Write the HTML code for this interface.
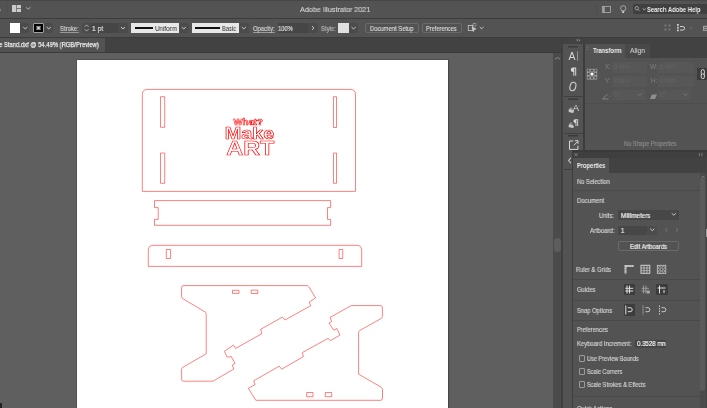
<!DOCTYPE html>
<html><head><meta charset="utf-8">
<style>
*{margin:0;padding:0;box-sizing:border-box}
html,body{width:707px;height:408px;overflow:hidden;background:#535353;font-family:"Liberation Sans",sans-serif;color:#d6d6d6}
.a{position:absolute}
.t{position:absolute;white-space:nowrap;line-height:1;transform-origin:0 0;will-change:transform}
svg{position:absolute;left:0;top:0;will-change:transform}
</style></head><body>
<!-- title bar -->
<div class="a" style="left:0;top:0;width:707px;height:1px;background:#474747"></div>
<div class="a" style="left:0;top:18px;width:707px;height:1px;background:#3c3c3c"></div>
<div class="a" style="left:0;top:37px;width:707px;height:1px;background:#3c3c3c"></div>
<!-- tab bar -->
<div class="a" style="left:0;top:38px;width:562px;height:14px;background:#424242"></div>
<div class="a" style="left:0;top:38px;width:105px;height:14px;background:#535353"></div>
<div class="a" style="left:0;top:52px;width:562px;height:1px;background:#3a3a3a"></div>
<!-- canvas -->
<div class="a" style="left:0;top:53px;width:553.2px;height:355px;background:#5f5f5f"></div>
<div class="a" style="left:77px;top:60px;width:370.5px;height:348px;background:#fff;box-shadow:0 0 0 0.6px #4a4a4a,1px 0 1px rgba(0,0,0,.25)"></div>
<div class="a" style="left:553.2px;top:53px;width:8.2px;height:355px;background:#4b4b4b"></div>
<div class="a" style="left:553.8px;top:238.4px;width:7.4px;height:13.7px;background:#5d5d5d;border-radius:3.7px"></div>
<div class="a" style="left:561.4px;top:38px;width:2px;height:370px;background:#404040"></div>
<!-- right dock -->
<div class="a" style="left:563.4px;top:38px;width:143.6px;height:6px;background:#424242"></div>
<div class="a" style="left:563.4px;top:44px;width:19.6px;height:364px;background:#535353"></div>
<div class="a" style="left:583px;top:44px;width:2px;height:106px;background:#3c3c3c"></div>
<div class="a" style="left:585px;top:44px;width:122px;height:106px;background:#535353"></div>
<div class="a" style="left:585px;top:44px;width:122px;height:14px;background:#424242"></div>
<div class="a" style="left:585px;top:44px;width:40px;height:14px;background:#535353"></div>
<div class="a" style="left:625px;top:44px;width:25px;height:14px;background:#494949"></div>
<!-- transform inputs -->
<div class="a" style="left:585px;top:103px;width:122px;height:1px;background:#4e4e4e"></div>
<div class="a" style="left:612px;top:61.5px;width:35px;height:11px;background:#575757"></div>
<div class="a" style="left:658px;top:61.5px;width:36px;height:11px;background:#575757"></div>
<div class="a" style="left:612px;top:75.5px;width:35px;height:11px;background:#575757"></div>
<div class="a" style="left:658px;top:75.5px;width:36px;height:11px;background:#575757"></div>
<div class="a" style="left:612px;top:89.5px;width:32.5px;height:10.5px;background:#575757"></div>
<div class="a" style="left:658px;top:89.5px;width:32px;height:10.5px;background:#575757"></div>
<div class="a" style="left:697px;top:67.5px;width:10px;height:12px;background:#3c3c3c"></div>
<!-- tool strip separators -->
<div class="a" style="left:564px;top:96px;width:19px;height:1px;background:#404040"></div>
<div class="a" style="left:564px;top:132.5px;width:19px;height:1px;background:#404040"></div>
<div class="a" style="left:564px;top:169px;width:8px;height:1px;background:#404040"></div>

<!-- properties panel -->
<div class="a" style="left:571.5px;top:151.5px;width:136px;height:257px;background:#535353"></div>
<div class="a" style="left:571.5px;top:151.5px;width:1px;height:257px;background:#3e3e3e"></div>
<div class="a" style="left:571.5px;top:150px;width:136px;height:1.5px;background:#3a3a3a"></div>
<div class="a" style="left:571.5px;top:151.5px;width:136px;height:6.5px;background:#3f3f3f"></div>
<div class="a" style="left:572.5px;top:158px;width:135px;height:14.5px;background:#424242"></div>
<div class="a" style="left:572.5px;top:158px;width:36.5px;height:14.5px;background:#535353"></div>
<div class="a" style="left:572.5px;top:190px;width:127px;height:1px;background:#4a4a4a"></div>
<div class="a" style="left:618px;top:210px;width:60.5px;height:9.5px;background:#474747;border-radius:1px"></div>
<div class="a" style="left:618px;top:225.5px;width:29px;height:9.5px;background:#474747"></div>
<div class="a" style="left:647px;top:225.5px;width:10px;height:9.5px;background:#4c4c4c"></div>
<div class="a" style="left:617.5px;top:240.5px;width:61.5px;height:10.5px;border:1px solid #6a6a6a;border-radius:2px"></div>
<div class="a" style="left:572.5px;top:279px;width:127px;height:1px;background:#4a4a4a"></div>
<div class="a" style="left:572.5px;top:299.5px;width:127px;height:1px;background:#4a4a4a"></div>
<div class="a" style="left:572.5px;top:320px;width:127px;height:1px;background:#4a4a4a"></div>
<div class="a" style="left:623.5px;top:283.5px;width:11.5px;height:11.5px;background:#3c3c3c;border-radius:1px"></div>
<div class="a" style="left:655.5px;top:283.5px;width:12px;height:11.5px;background:#3c3c3c;border-radius:1px"></div>
<div class="a" style="left:623.5px;top:304px;width:11.5px;height:11.5px;background:#3c3c3c;border-radius:1px"></div>
<div class="a" style="left:634.5px;top:339.5px;width:31px;height:8.5px;background:#454545"></div>
<div class="a" style="left:578.8px;top:355px;width:6.2px;height:6.8px;border:1px solid #9c9c9c;border-radius:1px"></div>
<div class="a" style="left:578.8px;top:368px;width:6.2px;height:6.8px;border:1px solid #9c9c9c;border-radius:1px"></div>
<div class="a" style="left:578.8px;top:381px;width:6.2px;height:6.8px;border:1px solid #9c9c9c;border-radius:1px"></div>
<div class="a" style="left:572.5px;top:395.5px;width:127px;height:1px;background:#4a4a4a"></div>
<div class="a" style="left:699.5px;top:172.5px;width:7.5px;height:236px;background:#4b4b4b"></div>
<div class="a" style="left:699.6px;top:178px;width:5.8px;height:213px;background:#5b5b5b;border-radius:3px"></div>
<div class="a" style="left:705.6px;top:158px;width:1.4px;height:250px;background:#444"></div>
<div class="a" style="left:706px;top:229px;width:1px;height:8px;background:#a0a0a0"></div>

<!-- control bar boxes -->
<div class="a" style="left:10px;top:23px;width:10px;height:10px;background:#fff"></div>
<div class="a" style="left:20px;top:23px;width:9px;height:10px;background:#4b4b4b"></div>
<div class="a" style="left:33px;top:23px;width:11px;height:10px;background:#000;border:1px solid #a0a0a0;border-radius:1px"></div>
<div class="a" style="left:44px;top:23px;width:9px;height:10px;background:#4b4b4b"></div>
<div class="a" style="left:82px;top:23px;width:9px;height:10.3px;background:#4b4b4b"></div>
<div class="a" style="left:91px;top:23px;width:27px;height:10.3px;background:#464646"></div>
<div class="a" style="left:118px;top:23px;width:10px;height:10.3px;background:#4b4b4b"></div>
<div class="a" style="left:131.4px;top:22.8px;width:47.5px;height:10.2px;background:#e8e8e8"></div>
<div class="a" style="left:134.6px;top:27.4px;width:18.4px;height:1.4px;background:#111"></div>
<div class="a" style="left:179px;top:23px;width:9.5px;height:10px;background:#4b4b4b"></div>
<div class="a" style="left:192.1px;top:22.8px;width:46.8px;height:10.2px;background:#e8e8e8"></div>
<div class="a" style="left:194.9px;top:27.4px;width:25.3px;height:1.4px;background:#111"></div>
<div class="a" style="left:239px;top:23px;width:9.5px;height:10px;background:#4b4b4b"></div>
<div class="a" style="left:277.8px;top:23px;width:30px;height:10px;background:#464646"></div>
<div class="a" style="left:308px;top:23px;width:10px;height:10px;background:#4b4b4b"></div>
<div class="a" style="left:338px;top:23px;width:11px;height:10px;background:#e0e0e0"></div>
<div class="a" style="left:349px;top:23px;width:9px;height:10px;background:#4b4b4b"></div>
<div class="a" style="left:365px;top:23.3px;width:54px;height:9.5px;border:1px solid #696969;border-radius:2px"></div>
<div class="a" style="left:421.8px;top:23.3px;width:40.2px;height:9.5px;border:1px solid #696969;border-radius:2px"></div>
<div class="a" style="left:632.7px;top:4.4px;width:74.3px;height:9.4px;background:#404040;border-radius:2px 0 0 2px"></div>

<svg width="707" height="408" viewBox="0 0 707 408">
<g fill="none" stroke="#c9c9c9" stroke-width="1" stroke-linecap="round">
<!-- chevrons -->
<path d="M23.5 27.3 l1.8 1.6 l1.8 -1.6"/>
<path d="M47 27.3 l1.8 1.6 l1.8 -1.6"/>
<path d="M121.2 27.3 l1.8 1.6 l1.8 -1.6"/>
<path d="M182 27.3 l1.8 1.6 l1.8 -1.6"/>
<path d="M242 27.3 l1.8 1.6 l1.8 -1.6"/>
<path d="M351.8 27.3 l1.8 1.6 l1.8 -1.6"/>
<path d="M480 27.3 l1.6 1.4 l1.6 -1.4"/>
<path d="M26.3 7.6 l1.9 1.5 l1.9 -1.5" stroke="#b8b8b8" stroke-width="0.9"/>
<path d="M312.4 26.4 l1.4 1.6 l-1.4 1.6"/>
<path d="M85 26.5 l1.6 -1.6 l1.6 1.6 M85 29.5 l1.6 1.6 l1.6 -1.6" stroke-width="0.8"/>
<path d="M555.3 59 l2.2 -1.6 l2.2 1.6" stroke="#9a9a9a" stroke-width="0.8"/>
<path d="M672 213.6 l1.8 1.6 l1.8 -1.6"/>
<path d="M650.5 229 l1.8 1.6 l1.8 -1.6"/>
<path d="M666.8 228.5 l-1.3 1.5 l1.3 1.5" stroke="#777"/>
<path d="M676.5 228.5 l1.3 1.5 l-1.3 1.5" stroke="#777"/>
<path d="M638 94 l1.6 1.4 l1.6 -1.4" stroke="#777"/>
<path d="M684 94 l1.6 1.4 l1.6 -1.4" stroke="#777"/>
<path d="M570.6 158.2 l-2 2.3 l2 2.3" stroke="#c4c4c4" stroke-width="1.1"/>
<path d="M643 8.8 l1.2 1 l1.2 -1" stroke-width="0.8"/>
</g>
<!-- title bar icons -->
<rect x="7" y="4" width="1" height="10" fill="#4e4e4e"/>
<rect x="0" y="9.3" width="1" height="1.6" fill="#8a8a8a"/>
<rect x="12" y="5" width="4.2" height="7" fill="#cacaca"/>
<rect x="16.8" y="5" width="4.2" height="3.1" fill="#cacaca"/>
<rect x="16.8" y="8.8" width="4.2" height="3.2" fill="#cacaca"/>
<rect x="596.3" y="4.5" width="0.8" height="9.5" fill="#4c4c4c"/>
<rect x="602.3" y="6.3" width="8.3" height="6.3" fill="none" stroke="#bdbdbd" stroke-width="0.7"/>
<rect x="602.6" y="6.6" width="2.2" height="5.7" fill="#a0a0a0"/>
<circle cx="623.2" cy="8.3" r="2.6" fill="none" stroke="#c4c4c4" stroke-width="0.7"/>
<path d="M622 10.5 l0.5 1.2 h1.4 l0.5 -1.2" fill="none" stroke="#c4c4c4" stroke-width="0.6"/>
<rect x="622.3" y="11.4" width="1.8" height="1.6" fill="#d8d8d8"/>
<circle cx="636.8" cy="8.2" r="1.7" fill="none" stroke="#c0c0c0" stroke-width="0.7"/>
<path d="M638 9.4 l1.5 1.5" stroke="#c0c0c0" stroke-width="0.7"/>
<!-- stroke swatch inner -->
<rect x="36.4" y="25.9" width="4.2" height="4.2" fill="#7a7a7a"/>
<path d="M37.1 26.6 l2.8 2.8 M39.9 26.6 l-2.8 2.8" stroke="#ffffff" stroke-width="0.9"/>
<!-- misc control bar icons -->
<g fill="none" stroke="#c8c8c8" stroke-width="0.8">
<rect x="468.3" y="25.5" width="4.5" height="5"/>
<path d="M472 27 l4 2 l-2 0.6 l-0.6 2 z" fill="#c8c8c8"/>
<rect x="473" y="23.5" width="3" height="2.5" stroke-dasharray="0.8 0.6"/>
</g>
<g fill="#7a7a7a">
<rect x="664.5" y="24.5" width="2" height="2"/><rect x="668.5" y="24.5" width="2" height="2"/>
<rect x="664.5" y="28.5" width="2" height="2"/><rect x="668.5" y="28.5" width="2" height="2"/>
</g>
<path d="M677.9 24 v8" stroke="#d0d0d0" stroke-width="1.8" stroke-dasharray="1.8 0.9"/>
<path d="M680 26.5 h2.8 a1.8 1.8 0 0 1 0 3.6 h-2.8" fill="none" stroke="#d0d0d0" stroke-width="1"/>
<path d="M689.5 27.3 l1.5 1.4 l1.5 -1.4" fill="none" stroke="#7a7a7a" stroke-width="0.8"/>
<path d="M703.5 26.3 h3.5 M703.5 28.3 h3.5 M703.5 30.3 h3.5" stroke="#b0b0b0" stroke-width="1"/><path d="M703.5 26 v4.8" stroke="#b0b0b0" stroke-width="0.8"/>
<!-- dock top chevrons -->
<path d="M576.6 39.4 l1.3 0.8 l-1.3 0.8 M578.8 39.4 l1.3 0.8 l-1.3 0.8" fill="none" stroke="#a8a8a8" stroke-width="0.7"/>
<!-- tool strip icons -->
<text x="568.6" y="59.7" font-family="Liberation Sans" font-size="10.4" fill="#d8d8d8">A</text>
<rect x="577" y="51.4" width="0.8" height="9.3" fill="#a8a8a8"/>
<path d="M573.3 67.6 h2.9 v8.1 h-1 v-7.2 h-0.9 v7.2 h-1 v-3.8 h-0.3 a2.2 2.2 0 0 1 0 -4.4 z" fill="#d8d8d8"/>
<ellipse cx="572.9" cy="86.5" rx="2.9" ry="4.3" transform="rotate(14 572.9 86.5)" fill="none" stroke="#cfcfcf" stroke-width="1.1"/>
<text x="572.8" y="110.5" font-family="Liberation Sans" font-size="9.4" fill="#d8d8d8">A</text>
<circle cx="570.2" cy="110.8" r="1.7" fill="#c8c8c8"/><circle cx="572.3" cy="111.5" r="1.5" fill="#c8c8c8"/><circle cx="571" cy="109" r="1.2" fill="none" stroke="#c8c8c8" stroke-width="0.6"/>
<path d="M575.2 119.3 h2.9 v6.6 h-0.9 v-5.8 h-0.8 v5.8 h-0.9 v-2.8 a1.9 1.9 0 0 1 -0.3 -3.8 z" fill="#d8d8d8"/>
<circle cx="570.2" cy="125.9" r="1.7" fill="#c8c8c8"/><circle cx="572.3" cy="126.6" r="1.5" fill="#c8c8c8"/><circle cx="571" cy="124.1" r="1.2" fill="none" stroke="#c8c8c8" stroke-width="0.6"/>
<path d="M573.2 141 h-3.7 v8.4 h8.4 v-3.7 M573.8 145.4 l4 -4 M574.9 140.7 h3.1 v3.1" fill="none" stroke="#d8d8d8" stroke-width="1"/>
<path d="M568 46.8 h10 M568 99.3 h10 M568 135.8 h10" stroke="#3a3a3a" stroke-width="1.4"/>
<!-- properties panel header -->
<path d="M574.5 153.2 l3 3 M577.5 153.2 l-3 3" stroke="#9a9a9a" stroke-width="0.7"/>
<path d="M700.2 153.3 l-1.4 1.3 l1.4 1.3 M702.6 153.3 l-1.4 1.3 l1.4 1.3" fill="none" stroke="#a8a8a8" stroke-width="0.7"/>
<path d="M701.3 177.8 l1.7 -1.5 l1.7 1.5" fill="none" stroke="#9a9a9a" stroke-width="0.7"/>
<!-- transform panel icons -->
<path d="M587.4 46.5 v1 M587.4 49 v1" stroke="#8a8a8a" stroke-width="0.8"/>
<rect x="586.8" y="68.8" width="10.4" height="10.8" fill="#9a9a9a"/>
<g fill="#4a4a4a">
<rect x="587.6" y="69.5" width="1.9" height="1.9"/><rect x="591" y="69.5" width="1.9" height="1.9"/><rect x="594.5" y="69.5" width="1.9" height="1.9"/>
<rect x="587.6" y="73.1" width="1.9" height="1.9"/><rect x="594.5" y="73.1" width="1.9" height="1.9"/>
<rect x="587.6" y="76.7" width="1.9" height="1.9"/><rect x="591" y="76.7" width="1.9" height="1.9"/><rect x="594.5" y="76.7" width="1.9" height="1.9"/>
</g>
<g fill="#707070">
<rect x="589.6" y="71.4" width="1.4" height="1.6"/><rect x="593" y="71.4" width="1.4" height="1.6"/>
<rect x="589.6" y="75.1" width="1.4" height="1.6"/><rect x="593" y="75.1" width="1.4" height="1.6"/>
</g>
<rect x="590.9" y="73" width="2.2" height="2.2" fill="#ffffff"/>
<rect x="701.2" y="69.6" width="3.2" height="5.2" rx="1.6" fill="none" stroke="#e0e0e0" stroke-width="0.9"/>
<rect x="701.2" y="73.4" width="3.2" height="5.2" rx="1.6" fill="none" stroke="#e0e0e0" stroke-width="0.9"/>
<path d="M702.8 72.5 v3.2" stroke="#3c3c3c" stroke-width="0.8"/>
<path d="M602.5 99 l5 -5 M602.5 99 h6" fill="none" stroke="#909090" stroke-width="0.8"/>
<path d="M650 99 l2 -4.5 h5 l-2 4.5 z" fill="#909090"/>
<!-- properties icons -->
<g fill="none" stroke="#d0d0d0" stroke-width="1">
<path d="M625.5 273.5 v-7.5 h8.2" stroke-width="2" stroke="#c8c8c8"/>
<path d="M627 266 h6.5 M625.5 267.5 v6" stroke-width="0.6" stroke="#6a6a6a" stroke-dasharray="0.6 0.9"/>
<rect x="641" y="265.3" width="8.8" height="8"/>
<path d="M644 265.3 v8 M647 265.3 v8 M641 268 h8.8 M641 270.7 h8.8" stroke-width="0.7"/>
<rect x="657.3" y="265.3" width="8.5" height="8" stroke-width="0.8"/>
<circle cx="659.8" cy="267.7" r="1.3" stroke-width="0.6"/><circle cx="663.3" cy="267.7" r="1.3" stroke-width="0.6"/>
<circle cx="659.8" cy="271" r="1.3" stroke-width="0.6"/><circle cx="663.3" cy="271" r="1.3" stroke-width="0.6"/>
<!-- guides -->
<path d="M627 285.5 v8 M629.5 285.5 v8 M625.3 288.3 h8 M625.3 291 h8" stroke="#e0e0e0"/>
<path d="M643.5 285.5 v8 M646 285.5 v8 M641.5 288.3 h7.5 M641.5 291 h5" stroke="#a8a8a8" stroke-width="0.8"/>
<rect x="646.8" y="290.5" width="3" height="3" fill="#a8a8a8" stroke="none"/>
<path d="M659.5 285.5 v8 M657.5 288 h8" stroke="#e0e0e0"/>
<path d="M664 290 v3" stroke="#e0e0e0"/>
<!-- snap -->
<path d="M625.8 305.5 v9" stroke="#e0e0e0"/>
<path d="M627.8 307.7 h2.4 a2 2 0 0 1 0 4 h-2.4" stroke="#e0e0e0"/>
<path d="M643 305.5 v9" stroke="#b8b8b8" stroke-dasharray="1 0.7"/>
<path d="M645.5 307.7 h2.4 a2 2 0 0 1 0 4 h-2.4" stroke="#c8c8c8"/>
<path d="M659.5 305.5 v9" stroke="#c8c8c8" stroke-dasharray="1.5 1"/>
<path d="M661.5 307.7 h2.4 a2 2 0 0 1 0 4 h-2.4" stroke="#c8c8c8"/>
</g>
<!-- artwork -->
<g fill="none" stroke="#ff0000" stroke-width="0.5" stroke-linejoin="round">
<path d="M142.3 191.4 V94.6 Q142.3 89.4 147.5 89.4 H350.3 Q355.5 89.4 355.5 94.6 V191.4 Z"/>
<rect x="160.5" y="96.7" width="4.2" height="30.6"/>
<rect x="333.5" y="96.7" width="3" height="30.8"/>
<rect x="160.5" y="153" width="4.2" height="30.3"/>
<rect x="333.5" y="153" width="3" height="30.3"/>
<path d="M154.5 200.6 H330.6 V207.6 H327.5 V219.4 H330.6 V225.3 H154.5 V219.4 H158.2 V207.6 H154.5 Z"/>
<path d="M148.3 266.4 V250.3 Q148.3 245.3 153.3 245.3 H356.7 Q361.7 245.3 361.7 250.3 V266.4 Z"/>
<rect x="166.3" y="249.5" width="4.3" height="9"/>
<rect x="339.1" y="249.5" width="3.6" height="9"/>
<path d="M183.5 285.6 H307.3 Q308.1 285.6 308.6 286.4 L315.6 297.9 L309.3 302.1 L310.7 305.7 L285 320 L282.4 317.1 L260.7 329.3 L261.9 333.7 L235.6 348.4 L233.5 345.1 L224.3 351.3 L227.2 357.2 L231.2 356.5 L235 363.5 L232.4 365 L233.8 369 L213 381.2 H183.6 Q181.6 381.2 181.6 379.2 V369.5 Q181.6 368 183 367.2 L206.2 353.8 V313.5 Q206.2 312.6 205.4 312.1 L183 298.8 Q181.6 298 181.6 296.5 V287.6 Q181.6 285.6 183.5 285.6 Z"/>
<rect x="232.5" y="290.3" width="6.5" height="3.1"/>
<rect x="251.2" y="290.1" width="6.6" height="3.4"/>
<path d="M351.2 305.6 H380.4 Q382.4 305.6 382.4 307.6 V316.3 Q382.4 317.8 381 318.6 L359.6 330.6 Q358.6 331.2 358.6 332.3 V374.2 L381.2 387.2 Q382.5 388 382.5 389.5 V398.3 Q382.5 400.3 380.5 400.3 H255.8 L248.3 388.3 L255 384.7 L253.7 380.8 L279.2 366.2 L281.7 369.2 L303.3 356.7 L302.5 352.5 L328 338.4 L330.6 340.6 L340 335 L336.8 328.5 L333.8 330.3 L329 323 L331.6 321.5 L330.1 317.4 Z"/>
<rect x="306.7" y="392.5" width="6.3" height="4.2"/>
<rect x="325.3" y="392.5" width="6.4" height="4.2"/>
<text x="248.2" y="125.3" text-anchor="middle" font-family="Liberation Sans" font-weight="bold" font-size="9.6" stroke-width="0.6">What?</text>
<text x="249.5" y="138.8" text-anchor="middle" font-family="Liberation Sans" font-weight="bold" font-size="17.3" stroke-width="0.65" transform="translate(249.5 0) scale(1.148 1) translate(-249.5 0)">Make</text>
<text x="250.35" y="154.7" text-anchor="middle" font-family="Liberation Sans" font-weight="bold" font-size="21" stroke-width="0.65" transform="translate(250.35 0) scale(1.119 1) translate(-250.35 0)">ART</text>
</g>
</svg>
<div class="a" style="left:-1px;top:403px;width:2.5px;height:6px;background:#222;border-radius:1px;filter:blur(0.5px)"></div>
<div class="t" style="left:300.10px;top:6.33px;font-size:7.4px;font-weight:normal;color:#d2d2d2;transform:scaleX(0.9724);-webkit-text-stroke:0.15px #d2d2d2;">Adobe Illustrator 2021</div>
<div class="t" style="left:646.74px;top:6.20px;font-size:7.2px;font-weight:bold;color:#ececec;transform:scaleX(0.8138);">Search Adobe Help</div>
<div class="t" style="left:59.54px;top:26.14px;font-size:6.8px;font-weight:normal;color:#d6d6d6;transform:scaleX(0.8715);text-decoration:underline;text-decoration-color:#9a9a9a;-webkit-text-stroke:0.15px #d6d6d6;">Stroke:</div>
<div class="t" style="left:92.11px;top:26.14px;font-size:6.8px;font-weight:normal;color:#e0e0e0;transform:scaleX(0.9767);-webkit-text-stroke:0.15px #e0e0e0;">1 pt</div>
<div class="t" style="left:154.74px;top:26.24px;font-size:6.8px;font-weight:normal;color:#2a2a2a;transform:scaleX(0.9198);-webkit-text-stroke:0px;">Uniform</div>
<div class="t" style="left:222.38px;top:26.24px;font-size:6.8px;font-weight:normal;color:#2a2a2a;transform:scaleX(0.8423);-webkit-text-stroke:0px;">Basic</div>
<div class="t" style="left:252.54px;top:26.14px;font-size:6.8px;font-weight:normal;color:#d6d6d6;transform:scaleX(0.8689);text-decoration:underline;text-decoration-color:#9a9a9a;-webkit-text-stroke:0.15px #d6d6d6;">Opacity:</div>
<div class="t" style="left:278.47px;top:26.14px;font-size:6.8px;font-weight:normal;color:#e0e0e0;transform:scaleX(0.8540);-webkit-text-stroke:0.15px #e0e0e0;">100%</div>
<div class="t" style="left:320.94px;top:26.14px;font-size:6.8px;font-weight:normal;color:#bcbcbc;transform:scaleX(0.8686);-webkit-text-stroke:0.15px #bcbcbc;">Style:</div>
<div class="t" style="left:370.27px;top:26.14px;font-size:6.8px;font-weight:normal;color:#dcdcdc;transform:scaleX(0.8622);-webkit-text-stroke:0.15px #dcdcdc;">Document Setup</div>
<div class="t" style="left:426.08px;top:26.14px;font-size:6.8px;font-weight:normal;color:#dcdcdc;transform:scaleX(0.8342);-webkit-text-stroke:0.15px #dcdcdc;">Preferences</div>
<div class="t" style="left:-0.55px;top:41.10px;font-size:7.2px;font-weight:normal;color:#ececec;transform:scaleX(0.8192);-webkit-text-stroke:0.25px #ececec;">e Stand.dxf @ 54.49% (RGB/Preview)</div>
<div class="t" style="left:592.90px;top:48.03px;font-size:6.7px;font-weight:bold;color:#f0f0f0;transform:scaleX(0.8702);">Transform</div>
<div class="t" style="left:630.30px;top:48.03px;font-size:6.7px;font-weight:normal;color:#c2c2c2;transform:scaleX(1.0088);-webkit-text-stroke:0.15px #c2c2c2;">Align</div>
<div class="t" style="left:624.46px;top:141.20px;font-size:6.5px;font-weight:normal;color:#8c8c8c;transform:scaleX(0.8728);-webkit-text-stroke:0.15px #8c8c8c;">No Shape Properties</div>
<div class="t" style="left:576.55px;top:162.50px;font-size:6.5px;font-weight:bold;color:#f0f0f0;transform:scaleX(0.8815);">Properties</div>
<div class="t" style="left:576.55px;top:179.30px;font-size:6.5px;font-weight:normal;color:#d4d4d4;transform:scaleX(0.8904);-webkit-text-stroke:0.15px #d4d4d4;">No Selection</div>
<div class="t" style="left:576.54px;top:197.70px;font-size:6.5px;font-weight:normal;color:#d4d4d4;transform:scaleX(0.9204);-webkit-text-stroke:0.15px #d4d4d4;">Document</div>
<div class="t" style="left:599.45px;top:212.50px;font-size:6.5px;font-weight:normal;color:#d4d4d4;transform:scaleX(0.9033);-webkit-text-stroke:0.15px #d4d4d4;">Units:</div>
<div class="t" style="left:620.63px;top:212.50px;font-size:6.5px;font-weight:normal;color:#f0f0f0;transform:scaleX(0.9439);-webkit-text-stroke:0.2px #f0f0f0;">Millimeters</div>
<div class="t" style="left:590.00px;top:227.80px;font-size:6.5px;font-weight:normal;color:#d4d4d4;transform:scaleX(0.9150);-webkit-text-stroke:0.15px #d4d4d4;">Artboard:</div>
<div class="t" style="left:620.66px;top:227.80px;font-size:6.5px;font-weight:normal;color:#f0f0f0;transform:scaleX(0.8621);-webkit-text-stroke:0.2px #f0f0f0;">1</div>
<div class="t" style="left:629.55px;top:243.80px;font-size:6.5px;font-weight:normal;color:#ececec;transform:scaleX(0.9078);-webkit-text-stroke:0.2px #ececec;">Edit Artboards</div>
<div class="t" style="left:576.45px;top:266.90px;font-size:6.5px;font-weight:normal;color:#d4d4d4;transform:scaleX(0.8942);-webkit-text-stroke:0.15px #d4d4d4;">Ruler &amp; Grids</div>
<div class="t" style="left:576.73px;top:287.30px;font-size:6.5px;font-weight:normal;color:#d4d4d4;transform:scaleX(0.8985);-webkit-text-stroke:0.15px #d4d4d4;">Guides</div>
<div class="t" style="left:576.82px;top:307.50px;font-size:6.5px;font-weight:normal;color:#d4d4d4;transform:scaleX(0.8915);-webkit-text-stroke:0.15px #d4d4d4;">Snap Options</div>
<div class="t" style="left:576.56px;top:326.50px;font-size:6.5px;font-weight:normal;color:#d4d4d4;transform:scaleX(0.8809);-webkit-text-stroke:0.15px #d4d4d4;">Preferences</div>
<div class="t" style="left:576.55px;top:341.20px;font-size:6.5px;font-weight:normal;color:#d4d4d4;transform:scaleX(0.9051);-webkit-text-stroke:0.15px #d4d4d4;">Keyboard Increment:</div>
<div class="t" style="left:636.71px;top:341.20px;font-size:6.5px;font-weight:normal;color:#f4f4f4;transform:scaleX(0.9335);-webkit-text-stroke:0.2px #f4f4f4;">0.3528 mn</div>
<div class="t" style="left:586.57px;top:355.90px;font-size:6.5px;font-weight:normal;color:#d4d4d4;transform:scaleX(0.8578);-webkit-text-stroke:0.15px #d4d4d4;">Use Preview Bounds</div>
<div class="t" style="left:586.83px;top:369.00px;font-size:6.5px;font-weight:normal;color:#d4d4d4;transform:scaleX(0.8571);-webkit-text-stroke:0.15px #d4d4d4;">Scale Corners</div>
<div class="t" style="left:586.83px;top:382.00px;font-size:6.5px;font-weight:normal;color:#d4d4d4;transform:scaleX(0.8629);-webkit-text-stroke:0.15px #d4d4d4;">Scale Strokes &amp; Effects</div>
<div class="t" style="left:576.73px;top:406.00px;font-size:6.5px;font-weight:normal;color:#d4d4d4;transform:scaleX(0.8909);-webkit-text-stroke:0.15px #d4d4d4;">Quick Actions</div>
<div class="t" style="left:614px;top:63.5px;font-size:6.3px;color:#646464">0 mm</div>
<div class="t" style="left:660px;top:63.5px;font-size:6.3px;color:#646464">0 mm</div>
<div class="t" style="left:614px;top:77.5px;font-size:6.3px;color:#646464">0 mm</div>
<div class="t" style="left:660px;top:77.5px;font-size:6.3px;color:#646464">0 mm</div>
<div class="t" style="left:614px;top:91.5px;font-size:6.3px;color:#646464">0°</div>
<div class="t" style="left:660px;top:91.5px;font-size:6.3px;color:#646464">0°</div>
<div class="t" style="left:605px;top:63.8px;font-size:6.5px;color:#7e7e7e">X:</div>
<div class="t" style="left:650px;top:63.8px;font-size:6.5px;color:#7e7e7e">W:</div>
<div class="t" style="left:605px;top:77.8px;font-size:6.5px;color:#7e7e7e">Y:</div>
<div class="t" style="left:650.5px;top:77.8px;font-size:6.5px;color:#7e7e7e">H:</div>
<div class="t" style="left:608.5px;top:92px;font-size:6.5px;color:#7e7e7e">:</div>
<div class="t" style="left:655px;top:92px;font-size:6.5px;color:#7e7e7e">:</div>
</body></html>
